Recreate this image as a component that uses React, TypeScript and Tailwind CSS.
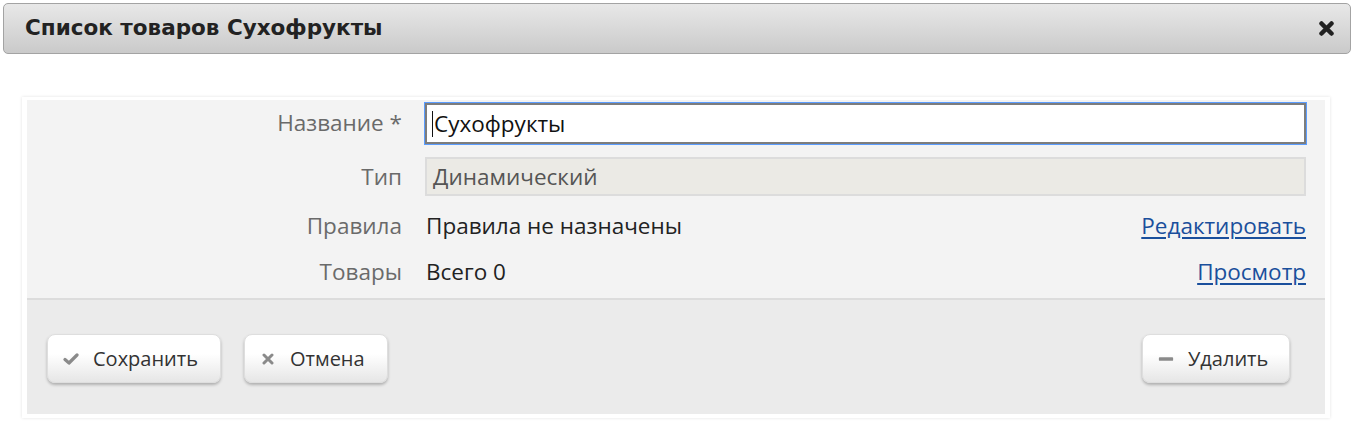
import React from "react";

function CheckIcon() {
  return (
    <svg width="16" height="14" viewBox="0 0 16 14">
      <path d="M2 7.5 L6 11 L14 3" fill="none" stroke="#8a8a8a" strokeWidth="3.2" strokeLinecap="round" strokeLinejoin="round" />
    </svg>
  );
}

function XIcon({ color = "#8a8a8a", size = 12, w = 3 }: { color?: string; size?: number; w?: number }) {
  return (
    <svg width={size} height={size} viewBox="0 0 12 12">
      <path d="M2 2 L10 10 M10 2 L2 10" fill="none" stroke={color} strokeWidth={w} strokeLinecap="round" />
    </svg>
  );
}

function MinusIcon() {
  return (
    <svg width="18" height="8" viewBox="0 0 18 8">
      <rect x="1" y="2" width="16" height="4" rx="1" fill="#8a8a8a" />
    </svg>
  );
}

function Btn({ icon, label, w }: { icon: React.ReactNode; label: string; w: string }) {
  return (
    <button
      className={`${w} h-[49px] flex items-center gap-[14px] pl-[15px] rounded-[8px] border border-[#dedede] bg-gradient-to-b from-white from-40% to-[#e6e6e6] shadow-[0_2px_3px_rgba(0,0,0,0.25)] text-[20px] text-[#333]`}
    >
      <span className="flex w-[16px] justify-center">{icon}</span>
      <span>{label}</span>
    </button>
  );
}

export default function App() {
  return (
    <div className="w-[1354px] h-[432px] bg-white font-['Open_Sans',sans-serif] overflow-hidden">
      <div className="mx-[3px] mt-[3px] h-[51px] rounded-[5px] border border-[#a3a3a3] bg-gradient-to-b from-[#e8e8e8] to-[#cacaca] flex items-center justify-between pl-[21px] pr-[16px]">
        <span className="font-['DejaVu_Sans',sans-serif] font-bold text-[21.5px] text-[#222]">Список товаров Сухофрукты</span>
        <XIcon color="#222" size={15} w={3.6} />
      </div>
      <div className="ml-[22px] mt-[43px] w-[1308px] border-x-[5px] border-t-[3px] border-b-[4px] border-white shadow-[0_0_3px_rgba(0,0,0,0.12)]">
        <div className="bg-[#f3f3f3] pt-[3px] pb-[3px] border-b-2 border-[#dcdcdc]">
          <div className="flex h-[41px] items-center">
            <div className="w-[375px] text-right text-[22.5px] text-[#6a6a6a] -mt-[2px]">Название *</div>
            <div className="ml-[23px] w-[881px] h-[41px] border-2 border-[#7d7d7d] outline outline-1 outline-[#5b9dff] bg-white flex items-center pl-[5px] text-[22.5px] text-[#111]">
              <span className="w-px h-[26px] bg-[#111] mr-px" />
              Сухофрукты
            </div>
          </div>
          <div className="flex h-[39px] items-center mt-[13px]">
            <div className="w-[375px] text-right text-[22.5px] text-[#6a6a6a]">Тип</div>
            <div className="ml-[23px] w-[881px] h-[39px] border-2 border-[#dcdcdc] bg-[#ebeae5] flex items-center pl-[6px] text-[22.5px] text-[#555]">
              Динамический
            </div>
          </div>
          <div className="flex h-[46px] items-center mt-[7px]">
            <div className="w-[375px] text-right text-[22.5px] text-[#6a6a6a]">Правила</div>
            <div className="ml-[24px] w-[880px] flex justify-between text-[22.5px] text-[#222]">
              <span>Правила не назначены</span>
              <a href="#" className="text-[#1a4f9c] underline underline-offset-[3px]">Редактировать</a>
            </div>
          </div>
          <div className="flex h-[46px] items-center">
            <div className="w-[375px] text-right text-[22.5px] text-[#6a6a6a]">Товары</div>
            <div className="ml-[24px] w-[880px] flex justify-between text-[22.5px] text-[#222]">
              <span>Всего 0</span>
              <a href="#" className="text-[#1a4f9c] underline underline-offset-[3px]">Просмотр</a>
            </div>
          </div>
        </div>
        <div className="bg-[#ebebeb] h-[114px] flex items-start pt-[34px] pl-[20px] pr-[35px]">
          <Btn icon={<CheckIcon />} label="Сохранить" w="w-[174px]" />
          <div className="ml-[23px]">
            <Btn icon={<XIcon />} label="Отмена" w="w-[144px]" />
          </div>
          <div className="ml-auto">
            <Btn icon={<MinusIcon />} label="Удалить" w="w-[148px]" />
          </div>
        </div>
      </div>
    </div>
  );
}
